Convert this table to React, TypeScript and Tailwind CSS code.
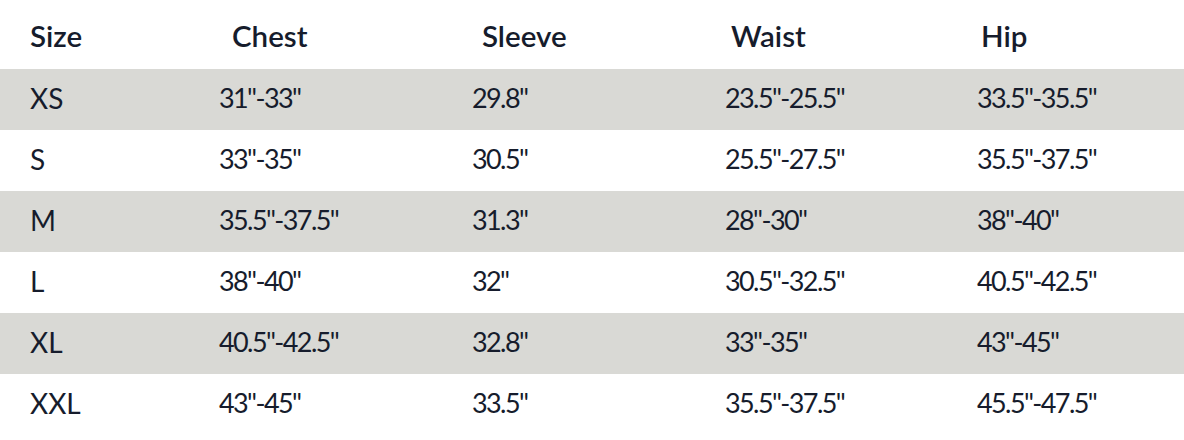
import React from "react";

const headers = [
  { label: "Size", pad: "pl-[30px]" },
  { label: "Chest", pad: "pl-[13px]" },
  { label: "Sleeve", pad: "pl-[10px]" },
  { label: "Waist", pad: "pl-[6px]" },
  { label: "Hip", pad: "pl-[4px]" },
];

const rows = [
  ["XS", '31"-33"', '29.8"', '23.5"-25.5"', '33.5"-35.5"'],
  ["S", '33"-35"', '30.5"', '25.5"-27.5"', '35.5"-37.5"'],
  ["M", '35.5"-37.5"', '31.3"', '28"-30"', '38"-40"'],
  ["L", '38"-40"', '32"', '30.5"-32.5"', '40.5"-42.5"'],
  ["XL", '40.5"-42.5"', '32.8"', '33"-35"', '43"-45"'],
  ["XXL", '43"-45"', '33.5"', '35.5"-37.5"', '45.5"-47.5"'],
];

export default function App() {
  return (
    <div className="w-[1184px] h-[440px] bg-white text-[#161c2c]">
      <div className="grid grid-cols-[219px_253px_253px_252px_1fr] h-[69px] items-center pt-[2px] font-['Lato',sans-serif] font-semibold text-[29.5px] leading-none">
        {headers.map((h) => (
          <div key={h.label} className={h.pad}>
            {h.label}
          </div>
        ))}
      </div>
      {rows.map((r, i) => (
        <div
          key={r[0]}
          className={`grid grid-cols-[219px_253px_253px_252px_1fr] h-[61px] items-center pb-[4px] font-['Lato',sans-serif] font-normal text-[27px] leading-none ${
            i % 2 === 0 ? "bg-[#d9d9d5]" : "bg-white"
          }`}
        >
          {r.map((c, j) => (
            <div key={j} className={j === 0 ? "pl-[30px] text-[28px]" : "tracking-[-1.6px]"}>
              {c}
            </div>
          ))}
        </div>
      ))}
    </div>
  );
}
